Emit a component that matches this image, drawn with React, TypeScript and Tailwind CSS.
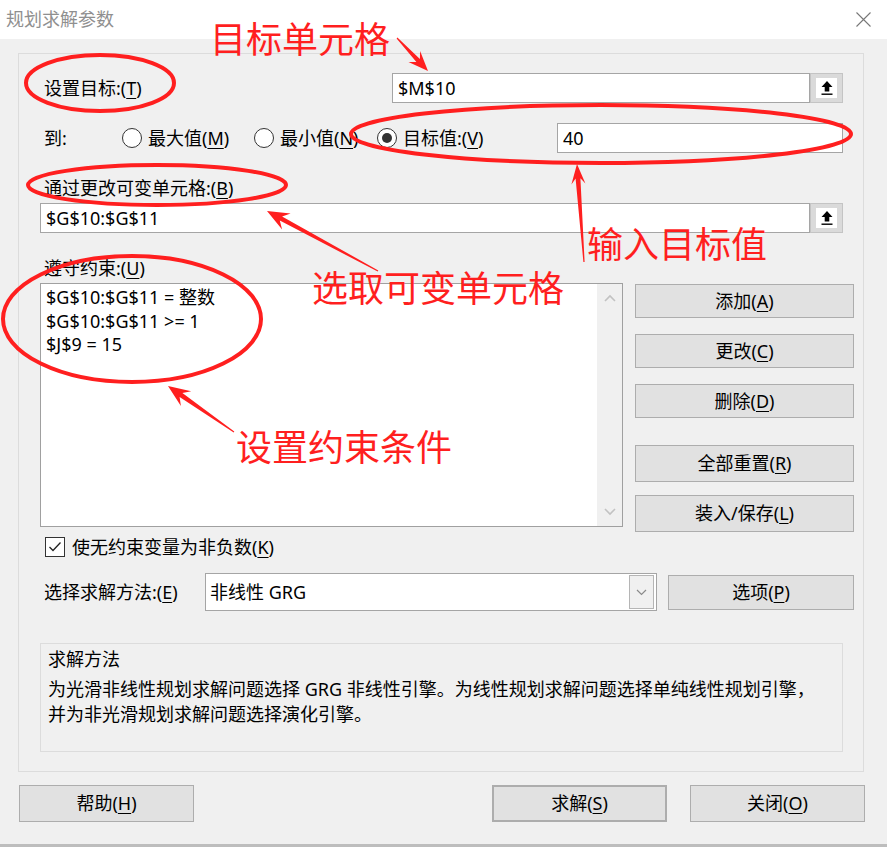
import React from "react";

const ui = "font-['Noto_Sans','Noto_Sans_CJK_SC',sans-serif]";
const red = "#ff1f1f";

const Key = ({ k }: { k: string }) => (
  <>
    (<u className="underline-offset-[3px] decoration-1">{k}</u>)
  </>
);

const RefButton = () => (
  <div className="flex h-[30px] w-[33px] items-center justify-center border border-[#c4c4c4] bg-[#dadada]">
    <div className="flex h-[20px] w-[21px] items-center justify-center bg-white">
      <svg width="14" height="16" viewBox="0 0 14 16">
        <path d="M7 1 L12.5 7 H9.3 V11.5 H4.7 V7 H1.5 Z" fill="#000" />
        <rect x="1.5" y="13.5" width="11" height="1.4" fill="#000" />
      </svg>
    </div>
  </div>
);

const Radio = ({ checked }: { checked?: boolean }) => (
  <span className="flex h-[20px] w-[20px] shrink-0 items-center justify-center rounded-full border border-[#333] bg-white">
    {checked && <span className="h-[10px] w-[10px] rounded-full bg-[#333]" />}
  </span>
);

const Btn = ({ children, className }: { children: React.ReactNode; className?: string }) => (
  <div
    className={
      "flex items-center justify-center border border-[#adadad] bg-[#e1e1e1] text-[18px] text-black " +
      (className ?? "")
    }
  >
    {children}
  </div>
);

function arrowPoints(x1: number, y1: number, x2: number, y2: number, hl = 22, hw = 9) {
  const dx = x2 - x1;
  const dy = y2 - y1;
  const L = Math.hypot(dx, dy);
  const ux = dx / L;
  const uy = dy / L;
  const px = -uy;
  const py = ux;
  const pts: [number, number][] = [
    [0, -0.6],
    [L - hl * 0.72, -2.4],
    [L - hl, -hw],
    [L, 0],
    [L - hl, hw],
    [L - hl * 0.72, 2.4],
    [0, 0.6],
  ];
  return pts.map(([a, b]) => `${(x1 + ux * a + px * b).toFixed(1)},${(y1 + uy * a + py * b).toFixed(1)}`).join(" ");
}

const Annotations = () => (
  <>
    <svg className="pointer-events-none absolute left-0 top-0" width="887" height="847" viewBox="0 0 887 847">
      <g fill="none" stroke={red} strokeWidth="4">
        <ellipse cx="100" cy="83" rx="74" ry="28" />
        <ellipse cx="601" cy="134" rx="250" ry="29" />
        <ellipse cx="157" cy="185" rx="129" ry="20" />
        <ellipse cx="132" cy="319" rx="129" ry="63" />
      </g>
      <g fill={red}>
        <polygon points={arrowPoints(397, 38, 428, 71, 20, 8)} />
        <polygon points={arrowPoints(584, 262, 577, 164, 20, 7)} />
        <polygon points={arrowPoints(378, 271, 267, 211, 22, 9)} />
        <polygon points={arrowPoints(234, 432, 168, 386, 22, 9)} />
      </g>
    </svg>
    <div className="absolute left-[210px] top-[22px] text-[36px] leading-none text-[#ff1f1f]">目标单元格</div>
    <div className="absolute left-[587px] top-[227px] text-[36px] leading-none text-[#ff1f1f]">输入目标值</div>
    <div className="absolute left-[312px] top-[271px] text-[36px] leading-none text-[#ff1f1f]">选取可变单元格</div>
    <div className="absolute left-[236px] top-[430px] text-[36px] leading-none text-[#ff1f1f]">设置约束条件</div>
  </>
);

const App = () => {
  const constraints = ["$G$10:$G$11 = 整数", "$G$10:$G$11 >= 1", "$J$9 = 15"];

  return (
    <div className={"relative flex h-[847px] w-[887px] flex-col overflow-hidden bg-[#f0f0f0] text-[18px] text-black " + ui}>
      {/* title bar */}
      <div className="flex h-[39px] shrink-0 items-center justify-between bg-white pl-[6px] pr-[16px]">
        <span className="text-[18px] text-[#8f8f8f]">规划求解参数</span>
        <svg width="15" height="15" viewBox="0 0 15 15">
          <path d="M0.5 0.5 L14.5 14.5 M14.5 0.5 L0.5 14.5" stroke="#777" strokeWidth="1.1" />
        </svg>
      </div>

      <div className="flex flex-1 flex-col pl-[18px] pt-[14px]">
        {/* main panel */}
        <div className="flex h-[719px] w-[846px] flex-col border border-[#dcdcdc] pl-[21px]">
          <div className="mt-[19px] flex h-[30px] w-[803px] items-center">
            <span className="flex-1 pl-[4px]">
              设置目标:<Key k="T" />
            </span>
            <div className="flex h-[30px] w-[418px] items-center border border-[#a5a5a5] bg-white pl-[5px]">$M$10</div>
            <RefButton />
          </div>

          <div className="mt-[20px] flex h-[30px] w-[803px] items-center">
            <span className="w-[82px] pl-[4px]">到:</span>
            <span className="flex w-[132px] items-center gap-[6px]">
              <Radio />
              <span>
                最大值<Key k="M" />
              </span>
            </span>
            <span className="flex w-[123px] items-center gap-[6px]">
              <Radio />
              <span>
                最小值<Key k="N" />
              </span>
            </span>
            <span className="flex flex-1 items-center gap-[6px]">
              <Radio checked />
              <span>
                目标值:<Key k="V" />
              </span>
            </span>
            <div className="flex h-[30px] w-[286px] items-center border border-[#a5a5a5] bg-white pl-[5px]">40</div>
          </div>

          <div className="mt-[24px] flex h-[22px] items-center pl-[4px]">
            通过更改可变单元格:<Key k="B" />
          </div>
          <div className="mt-[4px] flex h-[30px] w-[803px] items-center">
            <div className="flex h-[30px] flex-1 items-center border border-[#a5a5a5] bg-white pl-[5px]">$G$10:$G$11</div>
            <RefButton />
          </div>

          <div className="mt-[24px] flex h-[22px] items-center pl-[4px]">
            遵守约束:<Key k="U" />
          </div>
          <div className="mt-[4px] flex items-start gap-[12px]">
            <div className="flex h-[244px] w-[583px] border border-[#a0a0a0] bg-white">
              <div className="flex-1 pl-[5px] pt-[2px] leading-[23.5px]">
                {constraints.map((c) => (
                  <div key={c}>{c}</div>
                ))}
              </div>
              <div className="flex w-[25px] flex-col items-center justify-between bg-[#f0f0f0] py-[10px]">
                <svg width="12" height="8" viewBox="0 0 12 8">
                  <path d="M1 7 L6 2 L11 7" fill="none" stroke="#c2c2c2" strokeWidth="1.6" />
                </svg>
                <svg width="12" height="8" viewBox="0 0 12 8">
                  <path d="M1 1 L6 6 L11 1" fill="none" stroke="#c2c2c2" strokeWidth="1.6" />
                </svg>
              </div>
            </div>
            <div className="flex w-[219px] flex-col">
              <Btn className="mt-[1px] h-[34px]">
                添加<Key k="A" />
              </Btn>
              <Btn className="mt-[16px] h-[34px]">
                更改<Key k="C" />
              </Btn>
              <Btn className="mt-[16px] h-[34px]">
                删除<Key k="D" />
              </Btn>
              <Btn className="mt-[27px] h-[37px]">
                全部重置<Key k="R" />
              </Btn>
              <Btn className="mt-[13px] h-[37px]">
                装入/保存<Key k="L" />
              </Btn>
            </div>
          </div>

          <div className="mt-[5px] flex h-[20px] items-center pl-[5px]">
            <span className="flex h-[20px] w-[20px] items-center justify-center border border-[#333] bg-white">
              <svg width="14" height="12" viewBox="0 0 14 12">
                <path d="M1.5 6 L5 9.5 L12.5 1.5" fill="none" stroke="#222" strokeWidth="1.3" />
              </svg>
            </span>
            <span className="ml-[7px]">
              使无约束变量为非负数<Key k="K" />
            </span>
          </div>

          <div className="mt-[16px] flex h-[38px] items-center">
            <span className="w-[165px] pl-[4px]">
              选择求解方法:<Key k="E" />
            </span>
            <div className="flex h-[38px] w-[452px] items-center border border-[#a5a5a5] bg-white">
              <span className="flex-1 pl-[4px]">非线性 GRG</span>
              <span className="mr-[2px] flex h-[34px] w-[25px] items-center justify-center border border-[#b5b5b5] bg-[#f0f0f0]">
                <svg width="11" height="7" viewBox="0 0 11 7">
                  <path d="M1 1 L5.5 5.5 L10 1" fill="none" stroke="#8a8a8a" strokeWidth="1.2" />
                </svg>
              </span>
            </div>
            <Btn className="ml-[11px] h-[35px] w-[186px]">
              选项<Key k="P" />
            </Btn>
          </div>

          <div className="mt-[32px] h-[109px] w-[803px] border border-[#dcdcdc] pl-[7px] pt-[3px] leading-[25px] whitespace-nowrap">
            <div className="mb-[5px]">求解方法</div>
            <div>为光滑非线性规划求解问题选择 GRG 非线性引擎。为线性规划求解问题选择单纯线性规划引擎，</div>
            <div>并为非光滑规划求解问题选择演化引擎。</div>
          </div>
        </div>

        {/* bottom buttons */}
        <div className="mt-[13px] flex h-[37px] items-center pl-[1px]">
          <Btn className="h-[37px] w-[175px]">
            帮助<Key k="H" />
          </Btn>
          <Btn className="ml-[298px] h-[37px] w-[175px] border-2 border-[#0078d7]">
            求解<Key k="S" />
          </Btn>
          <Btn className="ml-[23px] h-[37px] w-[175px]">
            关闭<Key k="O" />
          </Btn>
        </div>
      </div>
      <div className="h-[3px] shrink-0 bg-[#bdbdbd]" />

      <Annotations />
    </div>
  );
};

export default App;
